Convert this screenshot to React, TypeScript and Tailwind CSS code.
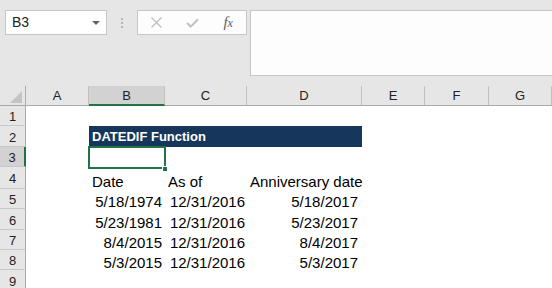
import { Fragment } from 'react'

const COLS = ['A', 'B', 'C', 'D', 'E', 'F', 'G']

// row heights measured from the sheet (gridline included)
const ROW_H = ['h-[20px]', 'h-[21px]', 'h-[20px]', 'h-[22px]', 'h-[20px]', 'h-[21px]', 'h-[20px]', 'h-[20px]', 'h-[21px]']

const dates = [
  ['5/18/1974', '12/31/2016', '5/18/2017'],
  ['5/23/1981', '12/31/2016', '5/23/2017'],
  ['8/4/2015', '12/31/2016', '8/4/2017'],
  ['5/3/2015', '12/31/2016', '5/3/2017'],
]

const gridCols = 'grid grid-cols-[26px_63px_76px_82px_115px_63px_64px_63px]'

function RowHead({ n, h }: { n: number; h: string }) {
  const active = n === 3
  return (
    <div
      className={`${h} flex items-center justify-center pt-[2px] border-b border-[#c8c8c8] text-[13px] leading-none text-[#222] ${
        active ? 'bg-[#d2d2d2] border-r-2 border-r-[#217346]' : 'bg-[#e6e6e6] border-r border-r-[#ababab]'
      }`}
    >
      {n}
    </div>
  )
}

function Cell({ text, align = 'left', pr = 'pr-[3px]' }: { text?: string; align?: 'left' | 'right'; pr?: string }) {
  return (
    <div
      className={`flex items-end text-[15px] leading-none text-black whitespace-nowrap ${
        align === 'right' ? `justify-end ${pr}` : 'pl-[3px]'
      }`}
    >
      {text}
    </div>
  )
}

export default function App() {
  return (
    <div className="w-[552px] h-[288px] overflow-hidden bg-white font-['Liberation_Sans',Arial,sans-serif]">
      {/* formula bar */}
      <div className="h-[86px] bg-[#e6e6e6] flex items-start pt-[10px] pl-[5px]">
        <div className="w-[102px] h-[25px] bg-white border border-[#c6c6c6] flex items-center justify-between pl-[6px] pr-[6px]">
          <span className="text-[14px] text-[#222]">B3</span>
          <svg width="8" height="4" viewBox="0 0 8 4">
            <path d="M0 0 L8 0 L4 4 Z" fill="#666" />
          </svg>
        </div>
        <div className="w-[30px] h-[25px] flex flex-col items-center justify-center gap-[2px]">
          <span className="w-[2px] h-[2px] bg-[#b4b4b4]" />
          <span className="w-[2px] h-[2px] bg-[#b4b4b4]" />
          <span className="w-[2px] h-[2px] bg-[#b4b4b4]" />
        </div>
        <div className="w-[110px] h-[25px] bg-[#fdfdfd] border border-[#c6c6c6] flex items-center">
          <div className="w-[36px] flex justify-center ml-[1px]">
            <svg width="11" height="11" viewBox="0 0 11 11">
              <path d="M0.5 0.5 L10.5 10.5 M10.5 0.5 L0.5 10.5" stroke="#bdbdbd" strokeWidth="1.2" />
            </svg>
          </div>
          <div className="w-[36px] flex justify-center">
            <svg width="13" height="10" viewBox="0 0 13 10">
              <path d="M1 5 L4.8 8.6 L12 1.2" stroke="#c2c2c2" strokeWidth="2" fill="none" />
            </svg>
          </div>
          <div className="w-[36px] flex justify-center">
            <span className="font-['Liberation_Serif',serif] italic text-[15px] text-[#5c5c5c] leading-none">
              f<span className="text-[12px]">x</span>
            </span>
          </div>
        </div>
        <div className="ml-[3px] flex-1 h-[66px] bg-[#fdfdfd] border border-r-0 border-[#c6c6c6]" />
      </div>

      {/* column headers */}
      <div className={`${gridCols} h-[20px] bg-[#e6e6e6] border-b border-[#ababab]`}>
        <div className="relative border-r border-[#ababab]">
          <svg className="absolute right-[3px] bottom-[2px]" width="12" height="12" viewBox="0 0 12 12">
            <path d="M12 0 L12 12 L0 12 Z" fill="#c4c4c4" />
          </svg>
        </div>
        {COLS.map((c) => (
          <div
            key={c}
            className={`flex items-center justify-center text-[13px] leading-none text-[#222] border-r border-[#c0c0c0] ${
              c === 'B' ? 'bg-[#d2d2d2] border-b-2 border-b-[#217346] -mb-px' : ''
            }`}
          >
            {c}
          </div>
        ))}
      </div>

      {/* sheet rows */}
      <div className={gridCols}>
        {ROW_H.map((h, i) => {
          const n = i + 1
          return (
            <Fragment key={n}>
              <RowHead n={n} h={h} />
              {n === 2 ? (
                <>
                  <div />
                  <div className="col-span-3 bg-[#16365c] flex items-center pl-[3px] text-white font-bold text-[13px] leading-none">
                    DATEDIF Function
                  </div>
                  <div />
                  <div />
                  <div />
                </>
              ) : n === 3 ? (
                <>
                  <div />
                  <div className="relative">
                    <div className="absolute -left-px -top-px right-[-1px] bottom-[-2px] border-2 border-[#217346]" />
                    <div className="absolute right-[-3px] bottom-[-5px] w-[6px] h-[6px] bg-[#217346] border border-white" />
                  </div>
                  <div />
                  <div />
                  <div />
                  <div />
                  <div />
                </>
              ) : n === 4 ? (
                <>
                  <div />
                  <Cell text="Date" />
                  <Cell text="As of" />
                  <Cell text="Anniversary date" />
                  <div />
                  <div />
                  <div />
                </>
              ) : n >= 5 && n <= 8 ? (
                <>
                  <div />
                  <Cell text={dates[n - 5][0]} align="right" />
                  <Cell text={dates[n - 5][1]} align="right" pr="pr-[2px]" />
                  <Cell text={dates[n - 5][2]} align="right" pr="pr-[4px]" />
                  <div />
                  <div />
                  <div />
                </>
              ) : (
                <>
                  <div />
                  <div />
                  <div />
                  <div />
                  <div />
                  <div />
                  <div />
                </>
              )}
            </Fragment>
          )
        })}
      </div>
    </div>
  )
}
